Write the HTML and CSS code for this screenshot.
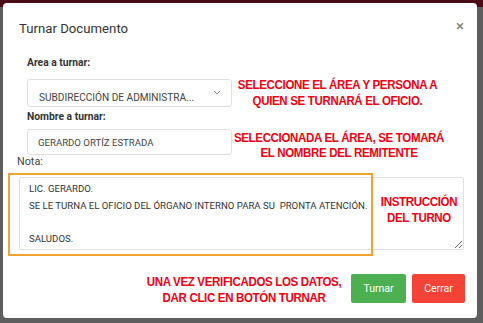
FILE: index.html
```html
<!DOCTYPE html>
<html lang="es">
<head>
<meta charset="utf-8">
<title>Turnar Documento</title>
<link rel="stylesheet" href="styles.css">
</head>
<body>
<div class="modal">
  <div class="modal-header">
    <h4 class="modal-title">Turnar Documento</h4>
    <span class="close">×</span>
  </div>
  <div class="modal-body">
    <div class="field">
      <label class="lbl">Area a turnar:</label>
      <div class="row row-1">
        <div class="control select">
          <span>SUBDIRECCIÓN DE ADMINISTRA...</span>
          <svg class="chev" width="8" height="5" viewBox="0 0 8 5"><path d="M0.8 0.8 L4 4 L7.2 0.8" fill="none" stroke="#888" stroke-width="1"/></svg>
        </div>
        <div class="note note-1">SELECCIONE EL ÁREA Y PERSONA A<br>QUIEN SE TURNARÁ EL OFICIO.</div>
      </div>
    </div>
    <div class="field">
      <label class="lbl lbl-2">Nombre a turnar:</label>
      <div class="row row-2">
        <div class="control input"><span>GERARDO ORTÍZ ESTRADA</span></div>
        <div class="note note-2">SELECCIONADA EL ÁREA, SE TOMARÁ<br>EL NOMBRE DEL REMITENTE</div>
      </div>
    </div>
    <label class="nota">Nota:</label>
    <div class="note-wrap">
      <textarea class="textarea">LIC. GERARDO.
SE LE TURNA EL OFICIO DEL ÓRGANO INTERNO PARA SU  PRONTA ATENCIÓN.

SALUDOS.</textarea>
      <div class="highlight"></div>
      <div class="note note-3">INSTRUCCIÓN<br>DEL TURNO</div>
    </div>
  </div>
  <div class="modal-footer">
    <div class="note note-4">UNA VEZ VERIFICADOS LOS DATOS,<br>DAR CLIC EN BOTÓN TURNAR</div>
    <button class="btn btn-green">Turnar</button>
    <button class="btn btn-red">Cerrar</button>
  </div>
</div>
</body>
</html>
```
FILE: styles.css
```css
html, body {
  margin: 0;
  padding: 0;
}
body {
  width: 483px;
  height: 323px;
  overflow: hidden;
  background: linear-gradient(#4a0b16 0, #4a0b16 7px, #5e5e5e 7px, #5e5e5e 100%);
  font-family: Roboto, "Liberation Sans", sans-serif;
  color: #333;
}
.modal {
  margin: 3px 6px 0 3px;
  width: 474px;
  height: 315px;
  background: #fff;
  border-radius: 4px;
  box-sizing: border-box;
  display: flex;
  flex-direction: column;
}
.modal-header {
  display: flex;
  justify-content: space-between;
  align-items: center;
  padding: 16px 13px 0 16px;
  height: 20px;
}
.modal-title {
  margin: 0;
  font-size: 13.2px;
  font-weight: 400;
  line-height: 20px;
  color: #333;
}
.close {
  font-size: 15px;
  color: #777;
  line-height: 20px;
  margin-top: -6px;
}
.modal-body {
  padding: 17px 0 0 24px;
}
.lbl {
  display: block;
  font-size: 10.3px;
  font-weight: 700;
  line-height: 14px;
  color: #333;
  margin-bottom: 9px;
}
.lbl-2 {
  margin-top: 3px;
  margin-bottom: 5px;
}
.row {
  display: flex;
  align-items: center;
}
.row-1 {
  height: 28px;
}
.row-2 {
  height: 26px;
}
.control {
  width: 205px;
  flex: none;
  box-sizing: border-box;
  border: 1px solid #e0e0e0;
  border-radius: 3px;
  display: flex;
  align-items: center;
  justify-content: space-between;
  padding: 0 10px 0 11px;
  color: #444;
}
.select {
  height: 28px;
  font-size: 10.1px;
}
.select span {
  margin-top: 8px;
}
.chev {
  margin-top: -2px;
}
.input {
  height: 26px;
  padding-left: 10px;
  font-size: 9.6px;
}
.note {
  color: #f00012;
  font-family: "Liberation Sans", Arial, sans-serif;
  font-weight: 700;
  font-size: 12px;
  line-height: 15.5px;
  text-align: center;
  letter-spacing: -0.35px;
  transform: scaleX(0.96);
  flex: none;
}
.note-1 {
  margin-left: -2px;
  margin-top: 1px;
  width: 215px;
}
.note-2 {
  margin-left: -4px;
  margin-top: 8px;
  width: 222px;
}
.nota {
  display: block;
  margin-left: -10px;
  font-size: 10.8px;
  line-height: 14px;
  color: #444;
  margin-top: 0;
}
.note-wrap {
  position: relative;
  margin-left: -8px;
  margin-top: 8px;
  width: 445px;
  height: 73px;
}
.textarea {
  display: block;
  width: 445px;
  height: 73px;
  box-sizing: border-box;
  border: 1px solid #e0e0e0;
  border-radius: 2px;
  padding: 3px 9px;
  font-family: Roboto, "Liberation Sans", sans-serif;
  font-size: 9.6px;
  line-height: 16.5px;
  color: #333;
  resize: both;
  overflow: hidden;
  margin: 0;
}
.highlight {
  position: absolute;
  left: -11px;
  top: -4px;
  width: 365px;
  height: 83px;
  box-sizing: border-box;
  border: 2px solid #f4a22f;
  pointer-events: none;
}
.note-3 {
  position: absolute;
  left: 357px;
  top: 18px;
  width: 86px;
}
.modal-footer {
  display: flex;
  justify-content: flex-end;
  align-items: center;
  padding: 20px 12px 0 0;
}
.note-4 {
  width: 210px;
  margin-top: 5px;
}
.btn {
  height: 29px;
  border: none;
  border-radius: 2px;
  color: #fff;
  font-family: Roboto, "Liberation Sans", sans-serif;
  font-size: 10.5px;
  padding: 0;
}
.btn-green {
  width: 55px;
  background: #4caf50;
  margin-left: 2px;
}
.btn-red {
  width: 53px;
  background: #f44336;
  margin-left: 6px;
}
```
